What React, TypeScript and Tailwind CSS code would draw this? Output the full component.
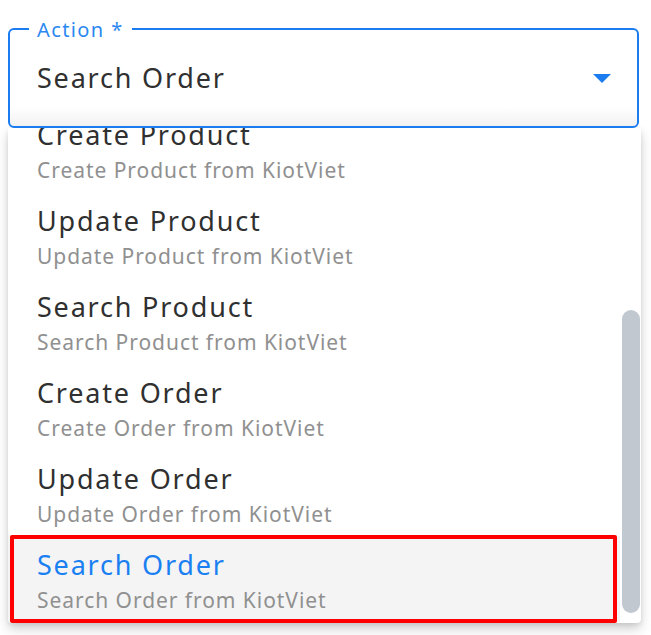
import { useState } from "react";

interface ActionOption {
  id: string;
  title: string;
  desc: string;
}

const options: ActionOption[] = [
  { id: "create_product", title: "Create Product", desc: "Create Product from KiotViet" },
  { id: "update_product", title: "Update Product", desc: "Update Product from KiotViet" },
  { id: "search_product", title: "Search Product", desc: "Search Product from KiotViet" },
  { id: "create_order", title: "Create Order", desc: "Create Order from KiotViet" },
  { id: "update_order", title: "Update Order", desc: "Update Order from KiotViet" },
  { id: "search_order", title: "Search Order", desc: "Search Order from KiotViet" },
];

export default function App() {
  const [selected, setSelected] = useState("search_order");
  const current = options.find((o) => o.id === selected);

  return (
    <div className="w-[651px] h-[635px] bg-white pt-[28px] pl-[8px] font-['Noto_Sans',sans-serif] overflow-hidden">
      {/* Select field */}
      <div className="relative w-[631px] h-[100px] border-2 border-[#1b7cf0] rounded-[6px] bg-gradient-to-b from-white from-80% to-[#f2f2f2]">
        <span className="absolute left-[19px] top-[-12px] px-[8px] bg-white text-[20px] leading-[24px] text-[#2b88f2] tracking-[1.4px]">
          Action *
        </span>
        <div className="flex items-center justify-between pt-[30px] pl-[27px] pr-[26px]">
          <span className="text-[27px] leading-[36px] text-[#303030] tracking-[1.8px]">{current?.title}</span>
          <svg width="18" height="9" viewBox="0 0 18 9">
            <path d="M0 0H18L9 9Z" fill="#1b7cf0" />
          </svg>
        </div>
      </div>

      {/* Dropdown list */}
      <div className="flex w-[633px] h-[495px] bg-white rounded-b-[4px] shadow-[0_6px_12px_rgba(0,0,0,0.18),0_2px_4px_rgba(0,0,0,0.08)] overflow-hidden">
        <div className="flex-1 mt-[-22px]">
          {options.map((o) => {
            const active = o.id === selected;
            return (
              <div
                key={o.id}
                onClick={() => setSelected(o.id)}
                className={`relative h-[86px] pt-[11px] pl-[29px] cursor-pointer ${active ? "bg-[#f4f4f4]" : "bg-white"}`}
              >
                {active && (
                  <div className="absolute left-[2px] right-[3px] top-[-1px] bottom-[-1px] border-4 border-[#ff0000] rounded-[2px]" />
                )}
                <div className={`text-[27px] leading-[36px] tracking-[1.8px] ${active ? "text-[#1a80f2]" : "text-[#303030]"}`}>
                  {o.title}
                </div>
                <div className="mt-[3px] text-[21px] leading-[29px] tracking-[0.95px] text-[#909090]">{o.desc}</div>
              </div>
            );
          })}
        </div>
        <div className="w-[21px] pl-[2px] pt-[182px]">
          <div className="w-[18px] h-[303px] rounded-full bg-[#c2c8d0]" />
        </div>
      </div>
    </div>
  );
}
